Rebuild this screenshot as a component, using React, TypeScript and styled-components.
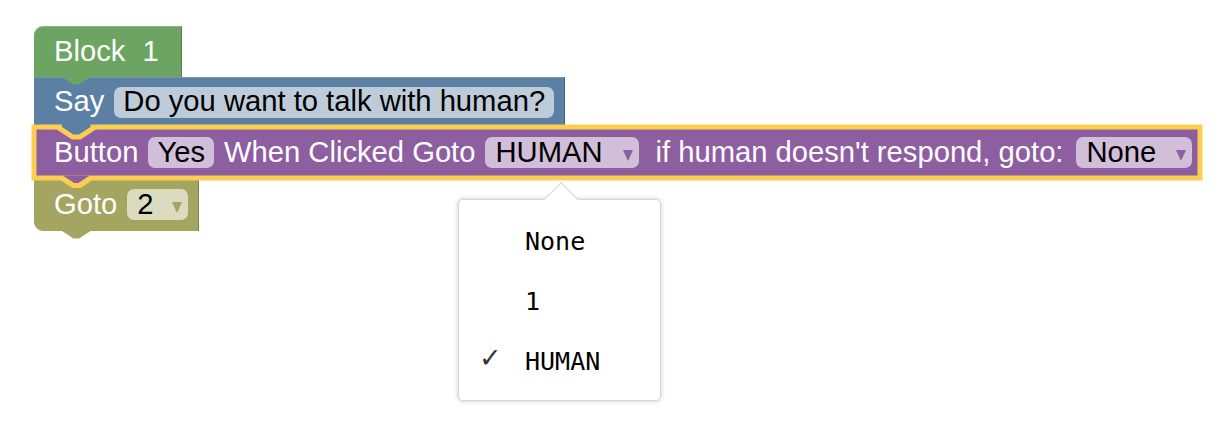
import React from "react";
import styled, { createGlobalStyle, css } from "styled-components";

const GlobalStyle = createGlobalStyle`
  html, body { margin: 0; padding: 0; background: #fff; }
  body { font-family: "Liberation Sans", Arial, sans-serif; }
`;

const HIGHLIGHT = "#fbcd50";

const Workspace = styled.div`
  position: relative;
  width: 1226px;
  height: 434px;
  overflow: hidden;
  box-sizing: border-box;
  padding: 26px 0 0 34px;
`;

const Stack = styled.div`
  display: flex;
  flex-direction: column;
  align-items: flex-start;
`;

type BlockProps = {
  $color: string;
  $h: number;
  $pr: number;
  $hat?: boolean;
  $last?: boolean;
  $selected?: boolean;
};

const Block = styled.div<BlockProps>`
  position: relative;
  display: flex;
  align-items: center;
  gap: 10px;
  height: ${(p) => p.$h}px;
  box-sizing: border-box;
  padding: 0 ${(p) => p.$pr}px 0 20px;
  background: ${(p) => p.$color};
  border-top-left-radius: ${(p) => (p.$hat ? 9 : 0)}px;
  border-bottom-left-radius: ${(p) => (p.$last ? 9 : 0)}px;
  box-shadow: inset -1px 0 0 rgba(0, 0, 0, 0.22), inset 0 1px 0 rgba(255, 255, 255, 0.18);
  font-size: 29.2px;
  color: #fff;
  ${(p) =>
    p.$selected &&
    css`
      z-index: 1;
      box-shadow: 0 0 0 2.5px ${HIGHLIGHT}, inset 0 0 0 2.5px ${HIGHLIGHT};
      &::before {
        content: "";
        position: absolute;
        left: 18px;
        top: 0;
        width: 49px;
        height: 13px;
        background: ${HIGHLIGHT};
        clip-path: polygon(0.98px 0, 47.52px 0, 28.62px 12.6px, 19.88px 12.6px);
      }
    `}
`;

const Label = styled.span<{ $ml?: number }>`
  white-space: pre;
  line-height: 1;
  margin-left: ${(p) => p.$ml ?? 0}px;
`;

const Field = styled.span<{ $dropdown?: boolean; $ml?: number }>`
  display: inline-flex;
  align-items: center;
  height: 31px;
  box-sizing: border-box;
  padding: ${(p) => (p.$dropdown ? "0 6px 0 10px" : "0 9px")};
  margin-left: ${(p) => p.$ml ?? 0}px;
  border-radius: 7px;
  background: rgba(255, 255, 255, 0.6);
  color: #000;
  white-space: pre;
  line-height: 1;
`;

const Arrow = styled.span<{ $color: string; $gap: number }>`
  display: inline-block;
  width: 0;
  height: 0;
  margin-left: ${(p) => p.$gap}px;
  margin-top: 5px;
  border-left: 5.5px solid transparent;
  border-right: 5.5px solid transparent;
  border-top: 11px solid ${(p) => p.$color};
`;

const Tab = styled.span<{ $color: string }>`
  position: absolute;
  left: 28px;
  top: calc(100% - 3px);
  width: 29px;
  height: 11px;
  background: ${(p) => p.$color};
  clip-path: polygon(0 0, 28.5px 0, 28.5px 3px, 17.1px 10.6px, 11.4px 10.6px, 0 3px);
  z-index: 2;
`;

const TabHalo = styled.span`
  position: absolute;
  left: 23px;
  top: calc(100% - 3px);
  width: 39px;
  height: 14px;
  background: ${HIGHLIGHT};
  clip-path: polygon(0.49px 3px, 38.01px 3px, 23.86px 13.1px, 15.14px 13.1px);
`;

const TabFill = styled.span<{ $color: string }>`
  position: absolute;
  left: 23px;
  top: calc(100% - 3px);
  width: 39px;
  height: 14px;
  background: ${(p) => p.$color};
  clip-path: polygon(5.76px 0.5px, 32.74px 0.5px, 21.34px 8.1px, 17.16px 8.1px);
`;

const Menu = styled.div`
  position: absolute;
  left: 458px;
  top: 199px;
  width: 203px;
  height: 202px;
  box-sizing: border-box;
  padding: 11px 0 8px;
  background: #fff;
  border: 1px solid #d6d6d6;
  border-radius: 5px;
  box-shadow: 0 0 4px 1px rgba(0, 0, 0, 0.14);
  &::before {
    content: "";
    position: absolute;
    left: 90px;
    top: -13px;
    width: 24px;
    height: 24px;
    box-sizing: border-box;
    background: #fff;
    border-top: 1px solid #d6d6d6;
    border-left: 1px solid #d6d6d6;
    transform: rotate(45deg);
  }
`;

const Item = styled.div`
  position: relative;
  display: flex;
  align-items: center;
  height: 60px;
  padding-left: 66px;
  font-family: "DejaVu Sans Mono", "Liberation Mono", monospace;
  font-size: 25px;
  color: #000;
`;

const Check = styled.span`
  position: absolute;
  left: 20px;
  top: 50%;
  transform: translateY(-60%);
  font-family: "DejaVu Sans", sans-serif;
  font-size: 27px;
  color: #333;
`;

const GREEN = "#6ca562";
const BLUE = "#5c80a4";
const PURPLE = "#8d5ea0";
const OLIVE = "#a5a562";

export default function App() {
  return (
    <>
      <GlobalStyle />
      <Workspace>
        <Stack>
          <Block $color={GREEN} $h={51} $pr={23} $hat>
            <Label>Block</Label>
            <Label $ml={7}>1</Label>
            <Tab $color={GREEN} />
          </Block>
          <Block $color={BLUE} $h={50} $pr={11}>
            <Label>Say</Label>
            <Field>Do you want to talk with human?</Field>
            <Tab $color={BLUE} />
          </Block>
          <Block $color={PURPLE} $h={51} $pr={8} $selected>
            <Label>Button</Label>
            <Field>Yes</Field>
            <Label>When Clicked Goto</Label>
            <Field $dropdown>
              HUMAN
              <Arrow $color={PURPLE} $gap={20} />
            </Field>
            <Label $ml={7}>if human doesn't respond, goto:</Label>
            <Field $dropdown $ml={3}>
              None
              <Arrow $color={PURPLE} $gap={20} />
            </Field>
            <TabHalo />
            <TabFill $color={PURPLE} />
          </Block>
          <Block $color={OLIVE} $h={53} $pr={11} $last>
            <Label>Goto</Label>
            <Field $dropdown>
              2
              <Arrow $color={OLIVE} $gap={18} />
            </Field>
            <Tab $color={OLIVE} />
          </Block>
        </Stack>
        <Menu>
          <Item>None</Item>
          <Item>1</Item>
          <Item>
            <Check>✓</Check>
            HUMAN
          </Item>
        </Menu>
      </Workspace>
    </>
  );
}
